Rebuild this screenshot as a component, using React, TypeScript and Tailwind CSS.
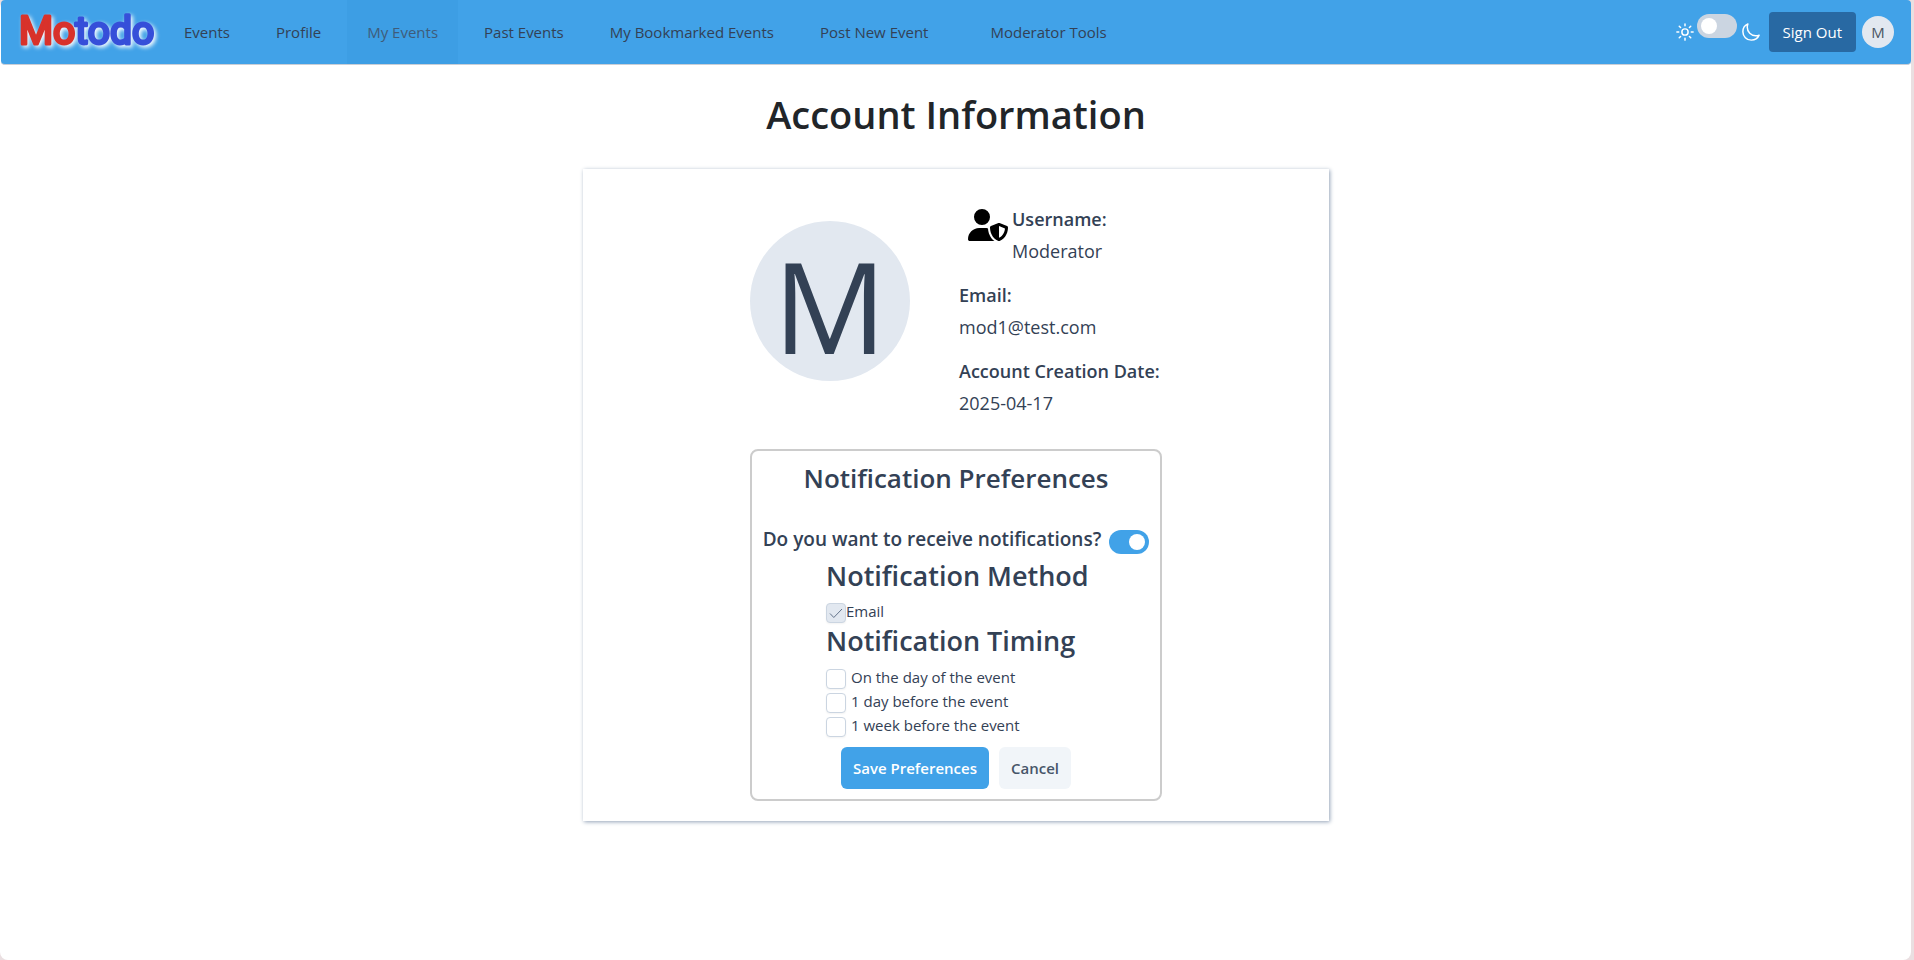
import { useState } from "react";
import { FaUserShield } from "react-icons/fa6";
import { IoMoonOutline, IoSunnyOutline } from "react-icons/io5";

const navItems = [
  { label: "Events" },
  { label: "Profile" },
  { label: "My Events", active: true },
  { label: "Past Events" },
  { label: "My Bookmarked Events" },
  { label: "Post New Event" },
];

const timings = ["On the day of the event", "1 day before the event", "1 week before the event"];

function Logo() {
  return (
    <svg
      role="img"
      aria-label="Motodo"
      width="147"
      height="48"
      viewBox="0 0 147 48"
      className="overflow-visible drop-shadow-[2px_2px_2px_#ffffff]"
      fontFamily="Roboto, sans-serif"
      fontSize="39"
      fontWeight="400"
      strokeWidth="3"
      strokeLinejoin="round"
      strokeLinecap="round"
    >
      <text x="2" y="36">
        <tspan fill="#d8322b" stroke="#d8322b">Mo</tspan>
        <tspan fill="#364fd9" stroke="#364fd9">todo</tspan>
      </text>
    </svg>
  );
}

function Switch({ label, checked, onChange, id }: { label: string; checked: boolean; onChange: (v: boolean) => void; id: string }) {
  return (
    <input
      id={id}
      type="checkbox"
      role="switch"
      aria-label={label}
      checked={checked}
      onChange={(e) => onChange(e.target.checked)}
      className="flex h-6 w-10 shrink-0 cursor-pointer appearance-none items-center rounded-full bg-[#cbd5e1] px-1 before:size-4 before:rounded-full before:bg-white checked:justify-end checked:bg-[#41a2e8]"
    />
  );
}

function Navbar() {
  const [dark, setDark] = useState(false);
  return (
    <header className="flex h-[65px] items-center rounded-[4px] border-b border-[#c9ced6] bg-[#41a2e8] pr-[17px] pl-4">
      <a href="#home" className="shrink-0">
        <Logo />
      </a>
      <nav className="flex h-full gap-[6px] text-[15px] text-[#334155]">
        {navItems.map((item) => (
          <a
            key={item.label}
            href="#nav"
            className={
              item.active
                ? "flex items-center bg-[#3d9ee4] px-5 whitespace-nowrap text-[#3f5c7a]"
                : "flex items-center px-5 whitespace-nowrap"
            }
          >
            {item.label}
          </a>
        ))}
        <a href="#moderator" className="ml-4 flex items-center px-5 whitespace-nowrap">
          Moderator Tools
        </a>
      </nav>
      <div className="ml-auto flex items-center">
        <IoSunnyOutline className="size-5 text-white [&_*]:[stroke-width:38px]" />
        <div className="mr-1 mb-3 ml-[2px]">
          <Switch id="theme" label="Dark mode" checked={dark} onChange={setDark} />
        </div>
        <IoMoonOutline className="size-5 text-white [&_*]:[stroke-width:38px]" />
        <button type="button" className="ml-2 h-10 rounded-[4px] bg-[#2869a3] px-[14px] text-[15px] text-white">
          Sign Out
        </button>
        <span className="ml-[6px] flex size-8 items-center justify-center rounded-full bg-[#e2e8f0] text-[15px] text-[#4b5563]">M</span>
      </div>
    </header>
  );
}

function Detail({ label, value }: { label: string; value: string }) {
  return (
    <div>
      <dt className="font-semibold whitespace-nowrap">{label}</dt>
      <dd>{value}</dd>
    </div>
  );
}

function CheckBox({ id, label, locked }: { id: string; label: string; locked?: boolean }) {
  return (
    <div className={locked ? "flex h-6 items-start" : "flex h-6 items-start gap-[5px]"}>
      <span className="mt-1 grid size-5 place-items-center">
        <input
          id={id}
          type="checkbox"
          defaultChecked={locked}
          disabled={locked}
          className="peer col-start-1 row-start-1 size-5 appearance-none rounded-[4px] border border-[#cbd5e1] bg-white shadow-xs disabled:bg-[#e2e8f0]"
        />
        <svg
          viewBox="0 0 14 14"
          className="pointer-events-none invisible col-start-1 row-start-1 size-[14px] peer-checked:visible"
          fill="none"
          stroke="#64748b"
          strokeWidth="1"
        >
          <path d="M1 7.5 4.8 11.5 13 3" />
        </svg>
      </span>
      <label htmlFor={id}>{label}</label>
    </div>
  );
}

function Preferences() {
  const [notify, setNotify] = useState(true);
  return (
    <form className="mt-[30px] rounded-lg border-2 border-[#cccccc] pt-[11px] pb-[10px]" onSubmit={(e) => e.preventDefault()}>
      <h2 className="text-center text-[26px] leading-8 font-semibold">Notification Preferences</h2>
      <div className="mt-[29px] flex items-start justify-center gap-2">
        <label htmlFor="notify" className="text-[19px] leading-8 font-semibold whitespace-nowrap">
          Do you want to receive notifications?
        </label>
        <div className="mt-[7px] flex">
          <Switch id="notify" label="Do you want to receive notifications?" checked={notify} onChange={setNotify} />
        </div>
      </div>
      <div className="pl-[74px] text-[15px] leading-6">
        <h3 className="mt-[5px] mb-[7px] text-[27px] leading-8 font-semibold">Notification Method</h3>
        <CheckBox id="email" label="Email" locked />
        <h3 className="mt-[2px] mb-2 text-[27px] leading-8 font-semibold">Notification Timing</h3>
        {timings.map((t) => (
          <CheckBox key={t} id={t.replaceAll(" ", "-")} label={t} />
        ))}
      </div>
      <div className="mt-[10px] flex justify-center gap-[10px] text-[15px]">
        <button type="submit" className="h-[42px] rounded-md bg-[#41a2e8] px-3 font-semibold text-white">
          Save Preferences
        </button>
        <button type="button" className="h-[42px] rounded-md bg-[#f1f5f9] px-3 font-semibold text-[#475569]">
          Cancel
        </button>
      </div>
    </form>
  );
}

export default function App() {
  return (
    <div className="min-h-screen bg-[#eadfe1] pr-[3px] font-['Open_Sans','Noto_Sans',sans-serif]">
      <div className="min-h-screen rounded-lg bg-white pl-px">
        <Navbar />
        <main className="flex flex-col items-center pb-8">
          <h1 className="mt-[25px] text-[38px] leading-[48px] font-semibold text-[#212529]">Account Information</h1>
          <section className="mt-[31px] flex w-full max-w-[746px] flex-col items-center bg-white pt-[34px] pb-5 text-[#334155] shadow-[1px_1px_4px_#94a3b8]">
            <div className="w-full max-w-[412px]">
              <div className="flex items-start gap-[49px]">
                <div className="mt-[18px] flex size-40 shrink-0 items-center justify-center rounded-full bg-[#e2e8f0] pt-2 text-[126px] leading-none">
                  M
                </div>
                <dl className="flex flex-col gap-3 text-[18px] leading-8">
                  <div className="flex gap-1 pl-[9px]">
                    <FaUserShield className="mt-[6px] h-8 w-10 text-black" />
                    <Detail label="Username:" value="Moderator" />
                  </div>
                  <Detail label="Email:" value="mod1@test.com" />
                  <Detail label="Account Creation Date:" value="2025-04-17" />
                </dl>
              </div>
              <Preferences />
            </div>
          </section>
        </main>
      </div>
    </div>
  );
}
